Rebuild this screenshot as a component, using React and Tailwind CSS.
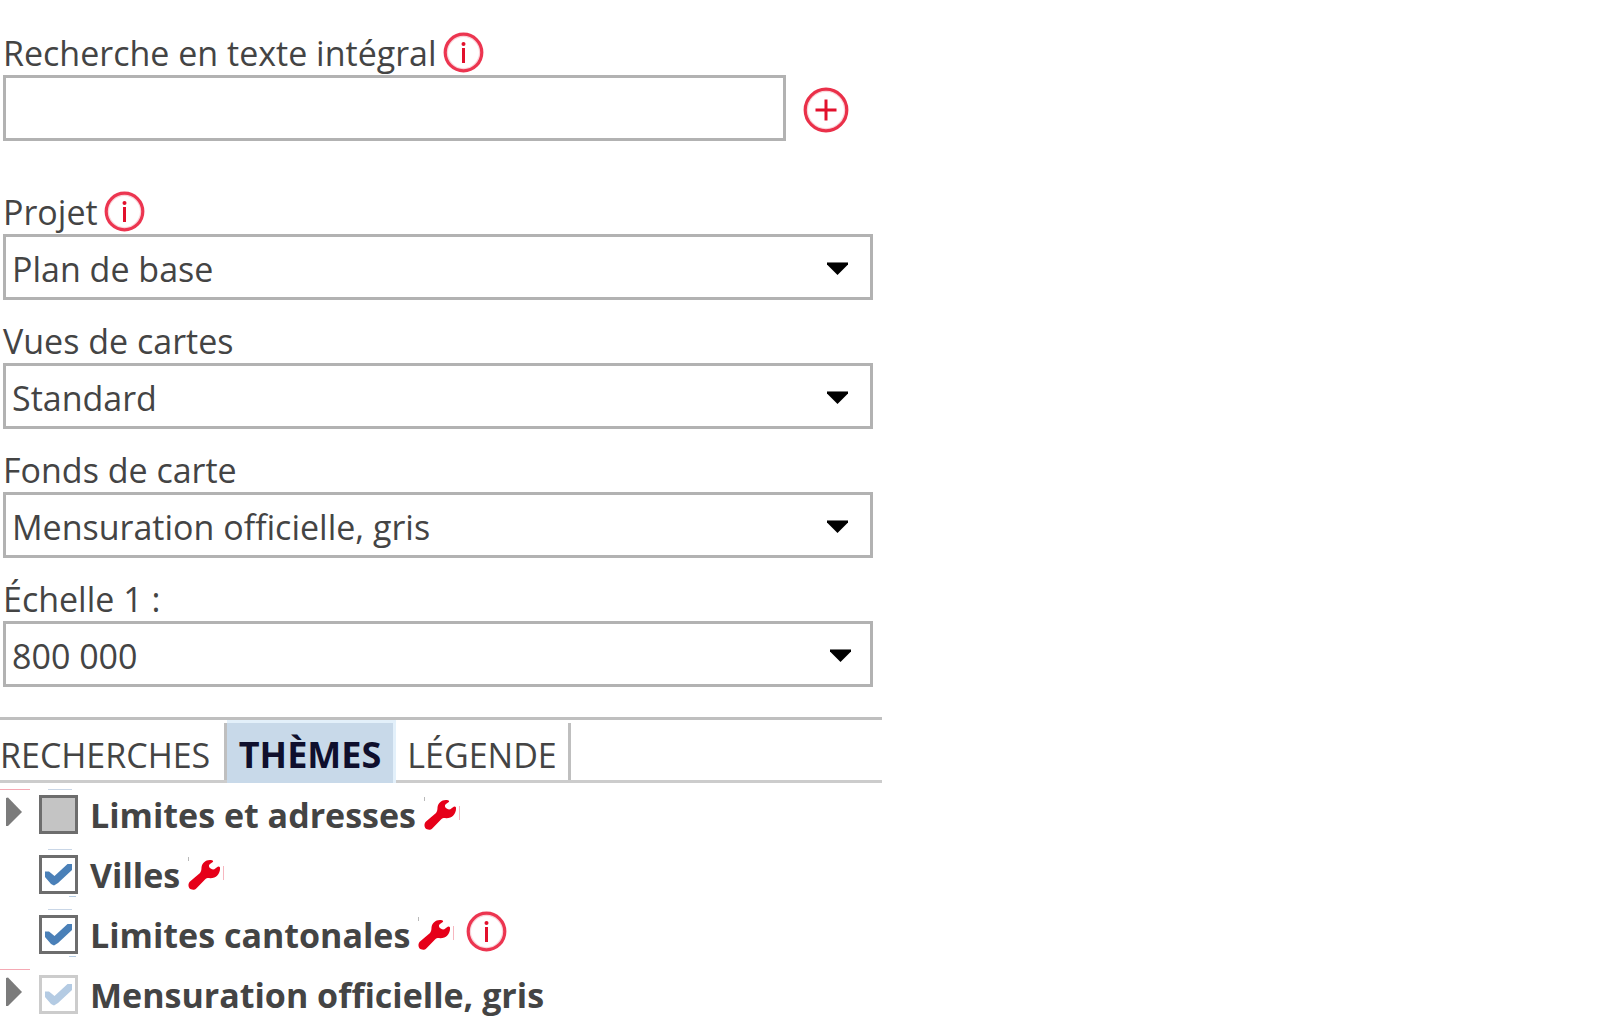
import { useState } from "react";

function InfoIcon() {
  return (
    <svg viewBox="0 0 41 41" className="h-[41px] w-[41px] shrink-0" fill="none" aria-hidden="true">
      <circle cx="20.500" cy="20.500" r="16.500" stroke="#fad3d9" strokeWidth="2" />
      <circle cx="20.500" cy="20.500" r="18.300" stroke="#ec3550" strokeWidth="3.200" />
      <circle cx="20.500" cy="12" r="2" fill="#e2102c" />
      <path d="M20.500 16V31" stroke="#e2102c" strokeWidth="3" />
    </svg>
  );
}

function PlusIcon() {
  return (
    <svg viewBox="0 0 46 46" className="h-[46px] w-[46px]" fill="none" aria-hidden="true">
      <circle cx="23" cy="23" r="19" stroke="#fad3d9" strokeWidth="2" />
      <circle cx="23" cy="23" r="20.800" stroke="#ea3049" strokeWidth="3.200" />
      <path d="M12.500 23h21M23 12.500v21" stroke="#e2102c" strokeWidth="3" />
    </svg>
  );
}

function WrenchIcon() {
  return (
    <svg viewBox="0 0 36 34" className="h-[34px] w-[36px] shrink-0" aria-hidden="true">
      <path
        fill="#e60019"
        d="M24.500 3.500C19 1.800 14 5.500 13.500 10.500C13.500 12.500 13.200 14.500 12 16L2 24.500C-.5 27 .2 31 3 32.300C5 33.200 7 32.800 8.500 31.200L17 22.500C18.500 21.200 20 20.800 22 21.200C28 21.500 32.500 16.500 32 10.500C31.500 9.300 30 9.200 29 10.200L26.300 12.300C24.500 12.800 21.500 11.500 21 9.500C20.800 8.200 21.300 7.500 22.300 6.800L24.800 5C25.300 4.400 25.200 3.800 24.500 3.500Z"
      />
      <path d="M35.500 9v14" stroke="#f7b7c0" strokeWidth="1" />
      <path d="M.5 0v4" stroke="#b9b9b9" strokeWidth="1" />
    </svg>
  );
}

function Field({ id, label, info, options, arrow = "right-[25px]" }) {
  return (
    <div className="mb-[15px] px-[3px]">
      <div className="flex h-12 items-center gap-1.5 pt-[3px]">
        <label htmlFor={id} className="pt-px">{label}</label>
        {info && (
          <button type="button" aria-label={"Informations : " + label}>
            <InfoIcon />
          </button>
        )}
      </div>
      <div className="relative mr-[6px]">
        <select
          id={id}
          className="block h-[66px] w-full appearance-none border-[3px] border-[#b2b2b2] bg-white pt-1 pl-[6px] outline-none"
        >
          {options.map((o) => (
            <option key={o}>{o}</option>
          ))}
        </select>
        <svg
          viewBox="0 0 21 14"
          className={"pointer-events-none absolute top-[28px] h-[14px] w-[21px] " + arrow}
          aria-hidden="true"
        >
          <path d="M0 1H21V2.500L12 11.500L10.500 13L9 11.500L0 2.500Z" fill="#000" />
          <path d="M0 .5H21" stroke="#777" strokeWidth="1" />
        </svg>
      </div>
    </div>
  );
}

function Theme({ id, label, state, expandable, wrench, info }) {
  const [checked, setChecked] = useState(state === "checked" || state === "dim");
  const box =
    state === "partial"
      ? "border-[#6d6d6d] bg-[#c4c4c4]"
      : state === "dim"
        ? "border-[#cccccc] bg-white"
        : "border-[#6d6d6d] bg-white";
  return (
    <li className="flex h-[60px] items-center">
      <div className="w-[39px] shrink-0">
        {expandable && (
          <button type="button" aria-label={"Développer " + label} className="mb-[5px] block">
            <svg viewBox="0 0 36 48" className="h-[48px] w-[36px]" aria-hidden="true">
              <path d="M0 1.500H30" stroke="#f5a9b4" strokeWidth="1" />
              <path d="M6 10L8 9.500L22 24L8 38L6 38Z" fill="#7b7b7b" />
            </svg>
          </button>
        )}
      </div>
      <div className="relative shrink-0">
        <input
          id={id}
          type="checkbox"
          checked={checked}
          onChange={() => setChecked(!checked)}
          className={"block h-[39px] w-[39px] appearance-none border-[3px] " + box}
        />
        <svg
          viewBox="0 0 39 39"
          className="pointer-events-none absolute inset-0 h-[39px] w-[39px] overflow-visible"
          fill={state === "dim" ? "#b4cbe3" : "#4a80b8"}
          aria-hidden="true"
        >
          {state !== "dim" && <path d="M9 -5.500H33" stroke="#c9d6e6" strokeWidth="1" />}
          {state === "checked" && <path d="M30 41.500H37" stroke="#b4cbe3" strokeWidth="1" />}
          {checked && (
            <path d="M6 16.500H10L15.500 21L28.500 9H33V15L19 28L15 30.500L12 29L6 22Z" />
          )}
        </svg>
      </div>
      <label htmlFor={id} className="ml-[9px] pt-0.5 pl-[3px] font-bold">
        {label}
      </label>
      {wrench && (
        <button type="button" aria-label={"Outils : " + label} className="ml-2">
          <WrenchIcon />
        </button>
      )}
      {info && (
        <button type="button" aria-label={"Informations : " + label} className="mb-[6px] ml-3">
          <InfoIcon />
        </button>
      )}
    </li>
  );
}

export default function App() {
  return (
    <main className="min-h-screen bg-white pt-[27px] font-['Open_Sans',sans-serif] text-[34px] leading-[48px] text-[#444444]">
      <div className="w-full max-w-[882px]">
        <div className="mb-[45px] px-[3px]">
          <div className="flex h-12 items-center gap-1.5 pt-[3px]">
            <label htmlFor="recherche" className="pt-px">Recherche en texte intégral</label>
            <button type="button" aria-label="Informations : Recherche">
              <InfoIcon />
            </button>
          </div>
          <div className="flex items-center gap-[17px] pr-[30px]">
            <input
              id="recherche"
              type="text"
              className="h-[66px] min-w-0 flex-1 border-[3px] border-[#b2b2b2] bg-white px-[6px] outline-none"
            />
            <button type="button" aria-label="Ajouter" className="pt-1">
              <PlusIcon />
            </button>
          </div>
        </div>

        <Field id="projet" label="Projet" info options={["Plan de base"]} />
        <Field id="vues" label="Vues de cartes" options={["Standard"]} />
        <Field id="fonds" label="Fonds de carte" options={["Mensuration officielle, gris"]} />
        <Field id="echelle" label="Échelle 1 :" options={["800 000"]} arrow="right-[22px]" />

        <div role="tablist" className="mt-[30px] flex h-[66px] border-t-[3px] border-[#bfbfbf]">
          <div className="flex border-b-[3px] border-[#cccccc] pt-[3px]">
            <button type="button" role="tab" aria-selected="false" className="w-[227px] border-r-[3px] border-[#bfbfbf] pt-[6px] text-left">
              RECHERCHES
            </button>
          </div>
          <button
            type="button"
            role="tab"
            aria-selected="true"
            className="w-[169px] border-t-[3px] border-r-[3px] border-[#e3f0fa] bg-[#c8d9e9] pt-[3px] text-center text-[36px] font-bold text-[#0f0f2d]"
          >
            THÈMES
          </button>
          <div className="flex flex-1 border-b-[3px] border-[#cccccc] pt-[3px]">
            <button type="button" role="tab" aria-selected="false" className="w-[175px] border-r-[3px] border-[#bfbfbf] pt-[6px] text-center">
              LÉGENDE
            </button>
          </div>
        </div>

        <ul className="pt-[1px]">
          <Theme id="t1" label="Limites et adresses" state="partial" expandable wrench />
          <Theme id="t2" label="Villes" state="checked" wrench />
          <Theme id="t3" label="Limites cantonales" state="checked" wrench info />
          <Theme id="t4" label="Mensuration officielle, gris" state="dim" expandable />
        </ul>
      </div>
    </main>
  );
}
